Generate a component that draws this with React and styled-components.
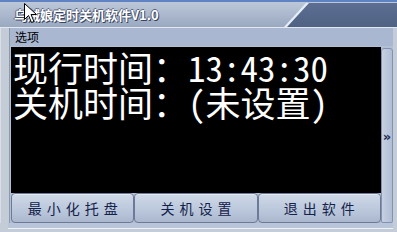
import React from 'react';
import styled, { createGlobalStyle } from 'styled-components';

const GlobalStyle = createGlobalStyle`
    html, body {
        margin: 0;
        padding: 0;
        background: #c4ccd8;
    }
    * {
        box-sizing: border-box;
    }
`;

const App = () => {
    return (<Window>
        <GlobalStyle />
        <TitleBar>
            <Title>乌贼娘定时关机软件V1.0</Title>
            <TitleTab />
            <Cursor width="13" height="21" viewBox="0 0 13 21">
                <path d="M0.5 0.5 L0.5 16.5 L4.5 12.5 L7.5 19.5 L10 18.5 L7 11.5 L12.5 11.5 Z"
                    fill="#fff" stroke="#000" strokeWidth="1" strokeLinejoin="miter" />
            </Cursor>
        </TitleBar>

        <Body>
            <MenuBar>
                <MenuItem>选项</MenuItem>
            </MenuBar>

            <Main>
                <LeftCol>
                    <Screen>
                        <ClockLine>现行时间：13:43:30</ClockLine>
                        <ClockLine>关机时间：(未设置)</ClockLine>
                    </Screen>
                    <ButtonRow>
                        <Button>最小化托盘</Button>
                        <Button>关机设置</Button>
                        <Button>退出软件</Button>
                    </ButtonRow>
                </LeftCol>
                <SideStrip>
                    <Chevron>»</Chevron>
                </SideStrip>
            </Main>
        </Body>
        <BottomEdge />
    </Window>);
}


const Window = styled.div`
    width: 397px;
    height: 232px;
    display: flex;
    flex-direction: column;
    background: #c4ccd8;
    font-family: "Noto Sans CJK SC", "Noto Sans", sans-serif;
    overflow: hidden;
`;

const TitleBar = styled.div`
    position: relative;
    height: 28px;
    display: flex;
    align-items: flex-end;
    border-top: 2px solid #5f83c2;
    border-bottom: 1px solid #e2e7f0;
    background: linear-gradient(#bcc7d9, #9aa9c1);
`;

const Title = styled.div`
    align-self: center;
    padding-left: 14px;
    font-size: 13px;
    font-weight: bold;
    line-height: 16px;
    color: #ffffff;
    text-shadow: 1px 1px 0 #3a4560, -1px 0 0 #5a6680, 0 -1px 0 #5a6680;
    white-space: nowrap;
`;

const TitleTab = styled.div`
    position: relative;
    margin-left: auto;
    width: 113px;
    height: 24px;
    background: #e8eef8;
    clip-path: polygon(22px 0, 100% 0, 100% 100%, 0 100%);

    &::before {
        content: "";
        position: absolute;
        inset: 0;
        background: linear-gradient(#5c6f93, #4f6283);
        clip-path: polygon(25px 0, 100% 0, 100% 100%, 3px 100%);
    }
`;

const Cursor = styled.svg`
    position: absolute;
    left: 24px;
    top: 1px;
`;

const Body = styled.div`
    display: flex;
    flex-direction: column;
    padding: 0 4px 0 8px;
    border-left: 1px solid #d8dde6;
`;

const MenuBar = styled.div`
    height: 18px;
    display: flex;
    align-items: center;
    padding-left: 5px;
    background: #a9b8d0;
    border-left: 1px solid #8c98ac;
`;

const MenuItem = styled.span`
    font-size: 12px;
    line-height: 14px;
    color: #000000;
`;

const Main = styled.div`
    display: flex;
    padding: 1px 0 0 1px;
    background: #b2c0d6;
    border-left: 1px solid #8c98ac;
`;

const LeftCol = styled.div`
    flex: 1;
    display: flex;
    flex-direction: column;
`;

const Screen = styled.div`
    height: 146px;
    background: #000000;
    padding: 2px 0 0 2px;
`;

const ClockLine = styled.div`
    font-family: "Noto Sans Mono CJK SC", "Noto Sans CJK SC", monospace;
    font-size: 35px;
    line-height: 35px;
    color: #ffffff;
    white-space: nowrap;
`;

const ButtonRow = styled.div`
    height: 30px;
    display: flex;
`;

const Button = styled.div`
    flex: 1;
    display: flex;
    align-items: center;
    justify-content: center;
    border: 1px solid #6c7a98;
    border-radius: 4px;
    background: linear-gradient(#cfd9e8, #b6c3d8 70%, #a9b6cc);
    box-shadow: inset 0 1px 0 #e4eaf3;
    font-size: 14px;
    letter-spacing: 5px;
    padding-left: 5px;
    color: #14224a;
`;

const SideStrip = styled.div`
    width: 12px;
    margin-top: 1px;
    display: flex;
    align-items: center;
    justify-content: center;
    border: 1px solid #8392b0;
    border-radius: 3px 3px 2px 2px;
    background: linear-gradient(90deg, #c6d0e2, #b0bdd3);
    padding-top: 3px;
`;

const Chevron = styled.span`
    font-family: "DejaVu Sans", sans-serif;
    font-size: 13px;
    font-weight: bold;
    line-height: 12px;
    color: #1c2a4c;
`;

const BottomEdge = styled.div`
    flex: 1;
    margin: 0 4px 3px 8px;
    border-bottom: 1px solid #eef1f6;
    background: #b8c4d8;
`;

export default App;
